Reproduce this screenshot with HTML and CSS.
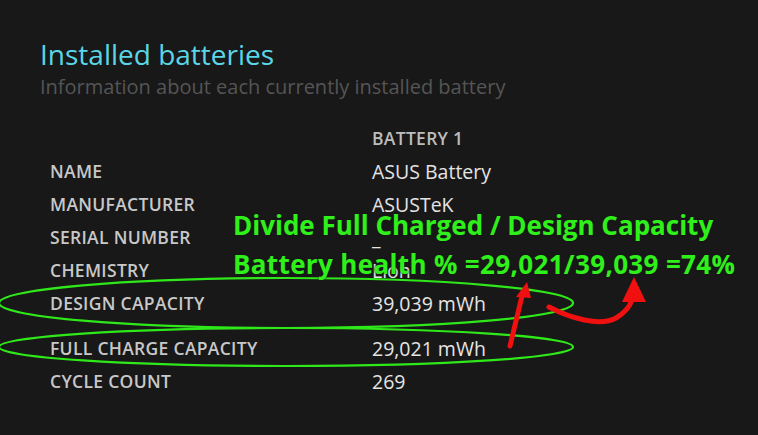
FILE: index.html
```html
<!DOCTYPE html>
<html lang="en">
  <head>
    <title>Battery report</title>
    <link rel="stylesheet" href="styles.css">
  </head>

  <body>
    <div class="page">
      <h1 class="title">Installed batteries</h1>
      <div class="subtitle">Information about each currently installed battery</div>

      <div class="battery-table">
        <div class="label"></div>
        <div class="col-head">BATTERY 1</div>

        <div class="label">NAME</div>
        <div class="value">ASUS Battery</div>

        <div class="label">MANUFACTURER</div>
        <div class="value">ASUSTeK</div>

        <div class="label">SERIAL NUMBER</div>
        <div class="value">_</div>

        <div class="label">CHEMISTRY</div>
        <div class="value">Lion</div>

        <div class="label">DESIGN CAPACITY</div>
        <div class="value">39,039 mWh</div>

        <div class="label spaced">FULL CHARGE CAPACITY</div>
        <div class="value spaced">29,021 mWh</div>

        <div class="label">CYCLE COUNT</div>
        <div class="value">269</div>
      </div>
    </div>

    <!-- annotation drawn on top of the report -->
    <svg class="marks" width="758" height="435" viewBox="0 0 758 435">
      <g fill="none" stroke="#2fe81a" stroke-width="2.2">
        <ellipse cx="286" cy="303" rx="287" ry="25" />
        <ellipse cx="286" cy="347" rx="287" ry="19" />
      </g>
      <g fill="none" stroke="#f01010" stroke-width="5" stroke-linecap="round">
        <line x1="510" y1="346" x2="522" y2="296" />
        <path d="M549 307 C570 318 600 327 616 318 C626 312 630 306 632 300" />
      </g>
      <g fill="#f01010">
        <polygon points="527,282 516,297 531,298" />
        <polygon points="634,277 622,302 646,302" />
      </g>
    </svg>

    <div class="note">
      <div>Divide Full Charged / Design Capacity</div>
      <div class="note-sum">Battery health % =29,021/39,039 =74%</div>
    </div>
  </body>
</html>
```

FILE: styles.css
```css
body {
  margin: 0;
  padding: 0;
  background-color: #181818;
  font-family: "Open Sans", "Noto Sans", sans-serif;
  width: 758px;
  height: 435px;
  overflow: hidden;
  position: relative;
}

.page {
  padding: 37px 0 0 40px;
}

.title {
  margin: 0;
  font-size: 28px;
  line-height: 34px;
  font-weight: 400;
  color: #5bd6e6;
}

.subtitle {
  margin-top: 3px;
  font-size: 20px;
  line-height: 26px;
  color: #555555;
}

.battery-table {
  display: grid;
  grid-template-columns: 322px auto;
  margin: 22px 0 0 10px;
}

.label,
.value,
.col-head {
  line-height: 33px;
  white-space: nowrap;
}

.label {
  font-size: 17.5px;
  letter-spacing: 0.3px;
  font-weight: 600;
  color: #c8c8c8;
}

.col-head {
  font-size: 17.5px;
  letter-spacing: 0.3px;
  font-weight: 600;
  color: #bdbdbd;
}

.value {
  font-size: 19.5px;
  color: #e4e4e4;
}

.spaced {
  padding-top: 12px;
}

.marks {
  position: absolute;
  left: 0;
  top: 0;
}

.note {
  position: absolute;
  left: 233px;
  top: 206px;
  font-size: 26px;
  line-height: 39px;
  font-weight: 700;
  color: #2ff01a;
  white-space: nowrap;
  text-shadow: 0 0 2px #181818;
}

.note-sum {
  letter-spacing: 0.35px;
}
```
